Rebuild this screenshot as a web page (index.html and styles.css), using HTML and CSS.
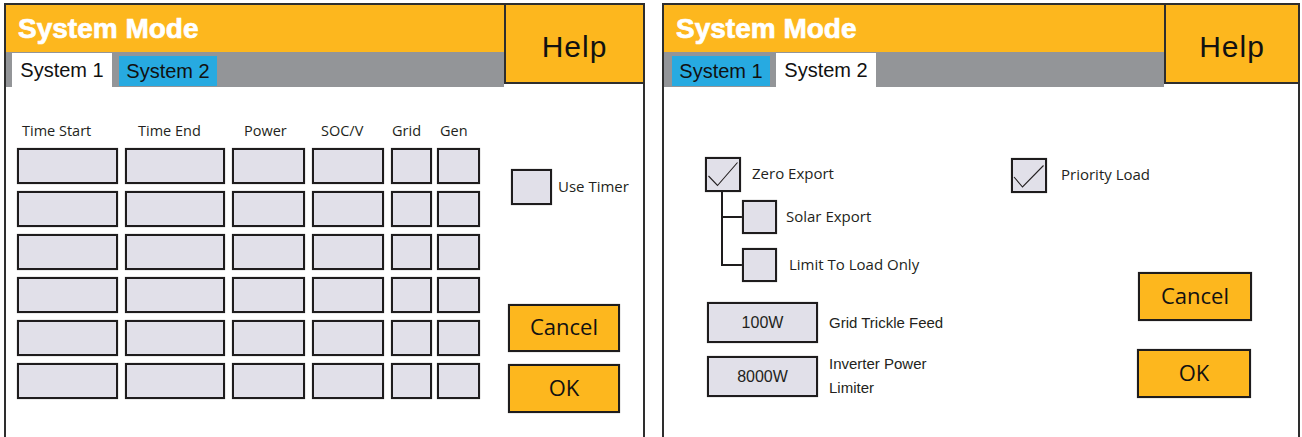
FILE: index.html
```html
<!DOCTYPE html>
<html lang="en">
<head>
    <meta charset="UTF-8">
    <title>System Mode</title>
    <link rel="stylesheet" href="styles.css">
</head>
<body>
    <!-- System 1 tab -->
    <div class="panel panel-left">
        <div class="head">
            <div class="head-main">
                <div class="title-bar">System Mode</div>
                <div class="tab-bar">
                    <div class="tab active">System 1</div>
                    <div class="tab">System 2</div>
                </div>
            </div>
            <div class="help">Help</div>
        </div>

        <div class="body-left">
            <div class="timer-grid">
                <div class="col-label">Time Start</div>
                <div class="col-label">Time End</div>
                <div class="col-label">Power</div>
                <div class="col-label">SOC/V</div>
                <div class="col-label">Grid</div>
                <div class="col-label">Gen</div>

                <div class="cell"></div><div class="cell"></div><div class="cell"></div><div class="cell"></div><div class="cell"></div><div class="cell"></div>
                <div class="cell"></div><div class="cell"></div><div class="cell"></div><div class="cell"></div><div class="cell"></div><div class="cell"></div>
                <div class="cell"></div><div class="cell"></div><div class="cell"></div><div class="cell"></div><div class="cell"></div><div class="cell"></div>
                <div class="cell"></div><div class="cell"></div><div class="cell"></div><div class="cell"></div><div class="cell"></div><div class="cell"></div>
                <div class="cell"></div><div class="cell"></div><div class="cell"></div><div class="cell"></div><div class="cell"></div><div class="cell"></div>
                <div class="cell"></div><div class="cell"></div><div class="cell"></div><div class="cell"></div><div class="cell"></div><div class="cell"></div>
            </div>

            <div class="side">
                <div class="check-row timer-row">
                    <div class="check check-timer"></div>
                    <span class="check-label">Use Timer</span>
                </div>
                <button class="btn btn-cancel">Cancel</button>
                <button class="btn btn-ok">OK</button>
            </div>
        </div>
    </div>

    <!-- System 2 tab -->
    <div class="panel panel-right">
        <div class="head">
            <div class="head-main">
                <div class="title-bar">System Mode</div>
                <div class="tab-bar">
                    <div class="tab">System 1</div>
                    <div class="tab active">System 2</div>
                </div>
            </div>
            <div class="help">Help</div>
        </div>

        <div class="body-right">
            <div class="options">
                <div class="check-row">
                    <div class="check">
                        <svg width="32" height="31" viewBox="0 0 32 31"><polyline points="1.5,17 10.5,26.5 30.5,3.5" fill="none" stroke="#231f20" stroke-width="1.1"/></svg>
                    </div>
                    <span class="check-label zero-label">Zero Export</span>
                </div>
                <div class="tree">
                    <div class="tree-child">
                        <div class="check check-small"></div>
                        <span class="check-label">Solar Export</span>
                    </div>
                    <div class="tree-child">
                        <div class="check check-small"></div>
                        <span class="check-label limit-label">Limit To Load Only</span>
                    </div>
                </div>

                <div class="field-row field-first">
                    <div class="field">100W</div>
                    <span class="field-label">Grid Trickle Feed</span>
                </div>
                <div class="field-row">
                    <div class="field">8000W</div>
                    <span class="field-label">Inverter Power<br>Limiter</span>
                </div>
            </div>

            <div class="side-right">
                <div class="check-row">
                    <div class="check">
                        <svg width="32" height="31" viewBox="0 0 32 31"><polyline points="1,17 9.5,27 30.5,5.5" fill="none" stroke="#231f20" stroke-width="1.1"/></svg>
                    </div>
                    <span class="check-label priority-label">Priority Load</span>
                </div>
                <button class="btn btn-cancel-r">Cancel</button>
                <button class="btn btn-ok-r">OK</button>
            </div>
        </div>
    </div>
</body>
</html>
```

FILE: styles.css
```css
body {
    margin: 0;
    padding: 3px 0 0 4px;
    display: flex;
    gap: 17px;
    background: #ffffff;
    font-family: "Liberation Sans", Arial, sans-serif;
    color: #231f20;
    overflow: hidden;
}
.panel {
    height: 450px;
    border: 2px solid #2e2e2e;
    border-bottom: none;
    box-sizing: border-box;
    display: flex;
    flex-direction: column;
}
.panel-left {
    width: 641px;
}
.panel-right {
    width: 638px;
}

/* header: title, tabs and help */
.head {
    display: flex;
    align-items: flex-start;
}
.head-main {
    flex: 1;
}
.title-bar {
    height: 47px;
    background: #fdb71e;
    color: #ffffff;
    font-weight: bold;
    font-size: 28px;
    -webkit-text-stroke: 0.7px #ffffff;
    line-height: 47px;
    padding-left: 12px;
}
.tab-bar {
    height: 35px;
    background: #939598;
    display: flex;
    align-items: flex-end;
    gap: 6px;
    padding-left: 6px;
}
.panel-right .tab-bar {
    padding-left: 8px;
}
.tab {
    width: 98px;
    height: 30px;
    margin-bottom: 1px;
    background: #27aae1;
    color: #111;
    font-size: 20px;
    line-height: 30px;
    text-align: center;
}
.tab.active {
    width: 100px;
    height: 34px;
    margin-bottom: 0;
    background: #ffffff;
    line-height: 34px;
}
.panel-left .tab:not(.active) {
    margin-left: 1px;
}
.help {
    width: 139px;
    height: 79px;
    box-sizing: border-box;
    background: #fdb71e;
    border-left: 2px solid #2e2e2e;
    border-bottom: 2px solid #2e2e2e;
    font-size: 30px;
    letter-spacing: 1px;
    line-height: 83px;
    text-align: center;
    color: #111;
}
.panel-right .help {
    width: 134px;
}

/* left body */
.body-left {
    display: flex;
    align-items: flex-start;
}
.timer-grid {
    margin: 35px 0 0 11px;
    display: grid;
    grid-template-columns: 101px 100px 73px 72px 41px 41px;
    grid-template-rows: 19px repeat(6, 36px);
    column-gap: 7px;
    row-gap: 7px;
}
.col-label {
    font-family: "Open Sans", sans-serif;
    font-size: 14.5px;
    line-height: 17px;
    white-space: nowrap;
}
.col-label:nth-child(1) { padding-left: 5px; }
.col-label:nth-child(2) { padding-left: 13px; }
.col-label:nth-child(3) { padding-left: 12px; }
.col-label:nth-child(4) { padding-left: 9px; }
.col-label:nth-child(5) { padding-left: 1px; }
.col-label:nth-child(6) { padding-left: 1px; }
.cell, .check, .field {
    box-sizing: border-box;
    background: #e1e0e9;
    border: 2px solid #1e1c1d;
    box-shadow: 0 0 1px #8a8a8a;
}
.cell:nth-child(6n) {
    margin-left: -2px;
}
.side {
    margin-left: 28px;
    display: flex;
    flex-direction: column;
    align-items: flex-start;
}
.check-row {
    display: flex;
    align-items: center;
}
.timer-row {
    margin: 82px 0 0 3px;
}
.check {
    width: 36px;
    height: 35px;
    padding: 0;
}
.check svg {
    display: block;
}
.check-timer {
    width: 41px;
    height: 36px;
}
.check-label {
    font-family: "Open Sans", sans-serif;
    font-size: 15px;
    line-height: 18px;
    margin: -3px 0 0 6px;
}
.btn {
    box-sizing: border-box;
    width: 112px;
    height: 48px;
    background: #fdb71e;
    border: 2px solid #1e1c1d;
    box-shadow: 0 0 1px #8a8a8a;
    font-family: "Open Sans", sans-serif;
    font-size: 22px;
    color: #111;
    padding: 0 0 4px;
}
.btn-cancel {
    margin-top: 99px;
}
.btn-ok {
    margin-top: 12px;
    height: 49px;
}

/* right body */
.body-right {
    display: flex;
    align-items: flex-start;
}
.options {
    width: 306px;
    margin: 70px 0 0 41px;
}
.zero-label {
    margin-left: 11px;
}
.tree {
    position: relative;
    margin-left: 16px;
    padding-top: 8px;
    display: flex;
    flex-direction: column;
    gap: 14px;
}
.tree::before {
    content: "";
    position: absolute;
    left: 0;
    top: 0;
    bottom: 16px;
    width: 2px;
    background: #1e1c1d;
}
.tree-child {
    display: flex;
    align-items: center;
}
.tree-child::before {
    content: "";
    width: 21px;
    height: 2px;
    background: #1e1c1d;
}
.check-small {
    width: 35px;
    height: 34px;
}
.tree-child .check-label {
    margin-left: 9px;
}
.tree-child .limit-label {
    margin-left: 12px;
}
.field-row {
    display: flex;
    align-items: center;
    margin: 9px 0 0 2px;
}
.field-first {
    margin-top: 20px;
}
.field {
    width: 111px;
    height: 41px;
    font-size: 16px;
    line-height: 37px;
    text-align: center;
    flex-shrink: 0;
}
.field-label {
    margin-left: 11px;
    font-size: 15px;
    line-height: 24px;
    white-space: nowrap;
}
.side-right {
    margin-top: 71px;
    display: flex;
    flex-direction: column;
    align-items: flex-start;
}
.priority-label {
    margin-left: 14px;
}
.btn-cancel-r {
    margin: 79px 0 0 127px;
    width: 114px;
    height: 49px;
}
.btn-ok-r {
    margin: 28px 0 0 126px;
    width: 114px;
    height: 49px;
}
```
